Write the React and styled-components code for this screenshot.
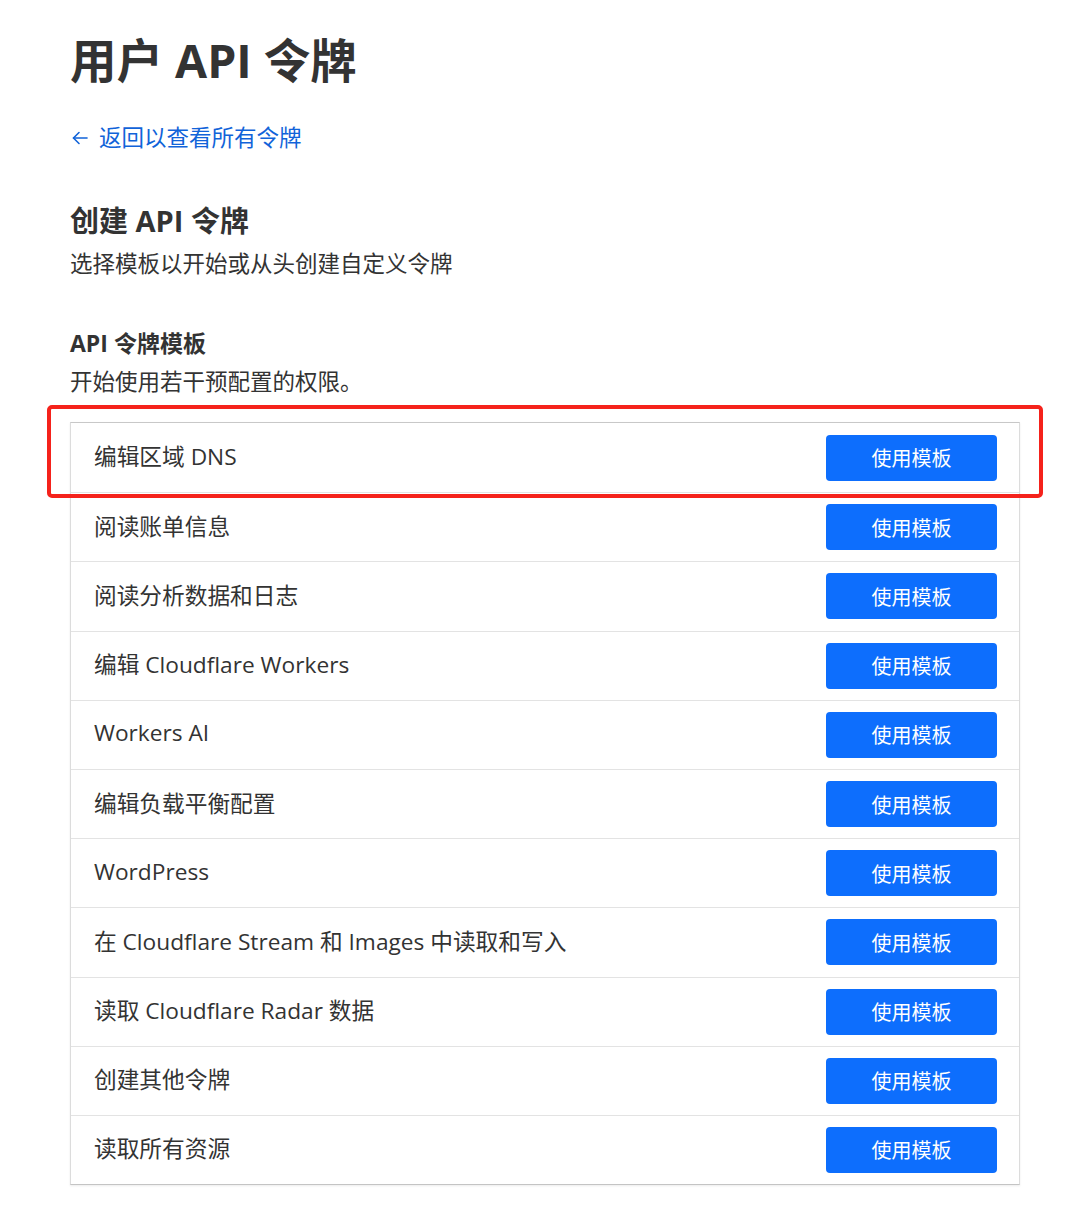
import React from 'react';
import styled, { createGlobalStyle } from 'styled-components';

const GlobalStyle = createGlobalStyle`
  body {
    margin: 0;
    background: #ffffff;
    color: #333333;
    font-family: "Open Sans", "Noto Sans CJK SC", sans-serif;
  }
`;

const Page = styled.div`
  padding: 0 60px 0 70px;
`;

const Title = styled.h1`
  margin: 33px 0 0;
  font-size: 46.5px;
  line-height: 55px;
  font-weight: 700;
  color: #333333;
`;

const BackLink = styled.a`
  display: flex;
  align-items: center;
  gap: 9px;
  margin-top: 34px;
  font-size: 22.5px;
  line-height: 32px;
  color: #1163d9;
  text-decoration: none;
  cursor: pointer;
`;

const SectionTitle = styled.h2`
  margin: 49px 0 0;
  font-size: 29px;
  line-height: 36px;
  font-weight: 700;
`;

const SubTitle = styled.h3`
  margin: 47px 0 0;
  font-size: 23px;
  line-height: 32px;
  font-weight: 700;
`;

const Text = styled.p`
  margin: ${p => p.$tight ? '7px' : '9px'} 0 0;
  font-size: 22.5px;
  line-height: 32px;
`;

const TableWrap = styled.div`
  position: relative;
  width: 950px;
  margin-top: 24px;
  margin-bottom: 40px;
`;

const Table = styled.div`
  border: 1px solid #dcdcdc;
  border-top-color: #c8c8c8;
  border-bottom-color: #c4c4c4;
  box-shadow: 0 1px 2px rgba(0, 0, 0, 0.08);
`;

const Row = styled.div`
  display: flex;
  align-items: center;
  justify-content: space-between;
  height: 69.2px;
  box-sizing: border-box;
  padding: 0 22px 0 23px;
  border-top: ${p => p.$first ? 'none' : '1px solid #e3e3e3'};
`;

const RowLabel = styled.span`
  margin-bottom: 4px;
  font-size: 22.7px;
  color: #333333;
`;

const UseButton = styled.button`
  width: 171px;
  height: 46px;
  border: none;
  border-radius: 4px;
  background: #0d6efd;
  color: #ffffff;
  font-family: inherit;
  font-size: 20px;
  cursor: pointer;
`;

const Highlight = styled.div`
  position: absolute;
  left: -23px;
  top: -17px;
  width: 996px;
  height: 93px;
  box-sizing: border-box;
  border: 4px solid #f5221b;
  border-radius: 5px;
  pointer-events: none;
`;

const templates = [
  '编辑区域 DNS',
  '阅读账单信息',
  '阅读分析数据和日志',
  '编辑 Cloudflare Workers',
  'Workers AI',
  '编辑负载平衡配置',
  'WordPress',
  '在 Cloudflare Stream 和 Images 中读取和写入',
  '读取 Cloudflare Radar 数据',
  '创建其他令牌',
  '读取所有资源',
];

function ArrowLeft() {
  return (
    <svg width="20" height="20" viewBox="0 0 20 20" fill="none" stroke="currentColor" strokeWidth="1.6" strokeLinecap="round" strokeLinejoin="round">
      <path d="M17 10H3.5" />
      <path d="M9 4.5L3.5 10L9 15.5" />
    </svg>
  );
}

export default function App() {
  return (
    <Page>
      <GlobalStyle />
      <Title>用户 API 令牌</Title>
      <BackLink>
        <ArrowLeft />
        返回以查看所有令牌
      </BackLink>

      <SectionTitle>创建 API 令牌</SectionTitle>
      <Text>选择模板以开始或从头创建自定义令牌</Text>

      <SubTitle>API 令牌模板</SubTitle>
      <Text $tight>开始使用若干预配置的权限。</Text>

      <TableWrap>
        <Table>
          {templates.map((name, i) => (
            <Row key={name} $first={i === 0}>
              <RowLabel>{name}</RowLabel>
              <UseButton>使用模板</UseButton>
            </Row>
          ))}
        </Table>
        <Highlight />
      </TableWrap>
    </Page>
  );
}
